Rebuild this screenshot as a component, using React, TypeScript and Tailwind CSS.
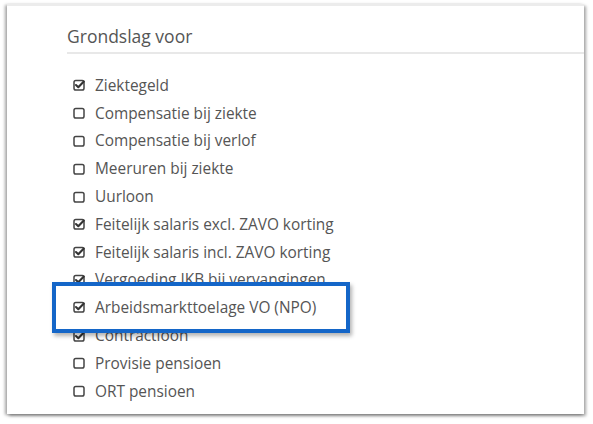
import React from "react";

type Item = { label: string; checked: boolean };

const items: Item[] = [
  { label: "Ziektegeld", checked: true },
  { label: "Compensatie bij ziekte", checked: false },
  { label: "Compensatie bij verlof", checked: false },
  { label: "Meeruren bij ziekte", checked: false },
  { label: "Uurloon", checked: false },
  { label: "Feitelijk salaris excl. ZAVO korting", checked: true },
  { label: "Feitelijk salaris incl. ZAVO korting", checked: true },
  { label: "Vergoeding IKB bij vervangingen", checked: true },
  { label: "Arbeidsmarkttoelage VO (NPO)", checked: true },
  { label: "Contractloon", checked: true },
  { label: "Provisie pensioen", checked: false },
  { label: "ORT pensioen", checked: false },
];

const Box = ({ checked }: { checked: boolean }) => (
  <svg width="13" height="12" viewBox="0 0 13 12" className="shrink-0">
    <rect x="1" y="1.5" width="10" height="9.5" rx="1.8" fill="none" stroke="#444" strokeWidth="1.5" />
    {checked && (
      <path d="M3 6 L5.3 8.2 L10.8 2.6" fill="none" stroke="#333" strokeWidth="2.1" strokeLinecap="round" strokeLinejoin="round" />
    )}
  </svg>
);

const Row = ({ item }: { item: Item }) => (
  <div className="h-[27.8px] flex items-center gap-[9px] pl-[6px]">
    <Box checked={item.checked} />
    <span className="text-[15.4px] text-[#555]">{item.label}</span>
  </div>
);

export default function App() {
  return (
    <div className="w-[593px] h-[424px] bg-white pt-[4px] pl-[7px] font-['Open_Sans',sans-serif]">
      <div className="relative w-[577px] h-[410px] bg-white border-t-2 border-[#ececec] shadow-[-2px_1px_3px_rgba(0,0,0,0.35),2px_2px_3px_rgba(0,0,0,0.35)]">
        <div className="pl-[60px] pt-[18px]">
          <div className="text-[17.5px] text-[#555] pb-[4px] border-b-2 border-[#e8e8e8] leading-[24px]">
            Grondslag voor
          </div>
          <div className="pt-[17.5px]">
            {items.map((it) => (
              <Row key={it.label} item={it} />
            ))}
          </div>
        </div>
        <div className="absolute left-[45px] top-[276px] w-[298px] h-[51px] bg-white border-4 border-[#1466c8] shadow-[2px_3px_4px_rgba(0,0,0,0.3)] flex items-center pl-[11px]">
          <Row item={items[8]} />
        </div>
      </div>
    </div>
  );
}
